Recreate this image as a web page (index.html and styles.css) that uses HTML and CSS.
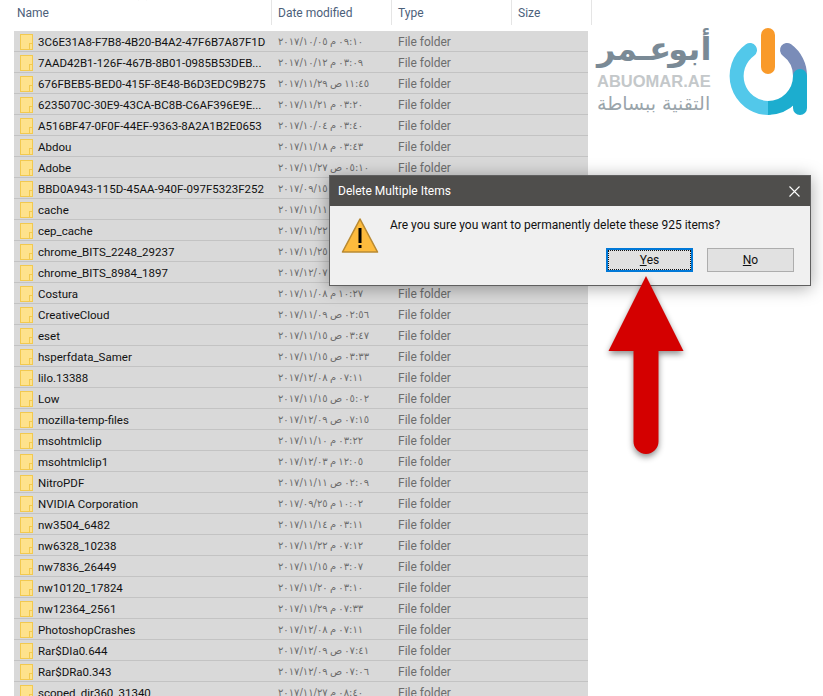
FILE: index.html
```html
<!DOCTYPE html>
<html lang="en">

<head>
    <meta charset="UTF-8">
    <title>Delete Multiple Items</title>
    <link rel="stylesheet" href="styles.css">
</head>

<body>
    <div class="page">
        <div class="explorer">
            <div class="header">
                <span class="sort-mark"></span>
                <div class="head-cell head-name">Name</div>
                <div class="head-cell head-date">Date modified</div>
                <div class="head-cell head-type">Type</div>
                <div class="head-cell head-size">Size</div>
            </div>

            <div class="rows">
                <div class="row"><i class="folder"></i><span class="name">3C6E31A8-F7B8-4B20-B4A2-47F6B7A87F1D</span><span class="date">٢٠١٧/١٠/٠٥&lrm; م&lrm; ٠٩:١٠</span><span class="type">File folder</span></div>
                <div class="row"><i class="folder"></i><span class="name">7AAD42B1-126F-467B-8B01-0985B53DEB...</span><span class="date">٢٠١٧/١٠/١٢&lrm; م&lrm; ٠٣:٠٩</span><span class="type">File folder</span></div>
                <div class="row"><i class="folder"></i><span class="name">676FBEB5-BED0-415F-8E48-B6D3EDC9B275</span><span class="date">٢٠١٧/١١/٢٩&lrm; ص&lrm; ١١:٤٥</span><span class="type">File folder</span></div>
                <div class="row"><i class="folder"></i><span class="name">6235070C-30E9-43CA-BC8B-C6AF396E9E...</span><span class="date">٢٠١٧/١١/٢١&lrm; م&lrm; ٠٣:٢٠</span><span class="type">File folder</span></div>
                <div class="row"><i class="folder"></i><span class="name">A516BF47-0F0F-44EF-9363-8A2A1B2E0653</span><span class="date">٢٠١٧/١٠/٠٤&lrm; م&lrm; ٠٣:٤٠</span><span class="type">File folder</span></div>
                <div class="row"><i class="folder"></i><span class="name">Abdou</span><span class="date">٢٠١٧/١١/١٨&lrm; م&lrm; ٠٣:٤٣</span><span class="type">File folder</span></div>
                <div class="row"><i class="folder"></i><span class="name">Adobe</span><span class="date">٢٠١٧/١١/٢٧&lrm; ص&lrm; ٠٥:١٠</span><span class="type">File folder</span></div>
                <div class="row"><i class="folder"></i><span class="name">BBD0A943-115D-45AA-940F-097F5323F252</span><span class="date">٢٠١٧/٠٩/١٥&lrm; م&lrm; ٠٣:١٢</span><span class="type">File folder</span></div>
                <div class="row"><i class="folder"></i><span class="name">cache</span><span class="date">٢٠١٧/١١/١١&lrm; ص&lrm; ٠٢:٠٥</span><span class="type">File folder</span></div>
                <div class="row"><i class="folder"></i><span class="name">cep_cache</span><span class="date">٢٠١٧/١١/٢٢&lrm; م&lrm; ٠٧:١٠</span><span class="type">File folder</span></div>
                <div class="row"><i class="folder"></i><span class="name">chrome_BITS_2248_29237</span><span class="date">٢٠١٧/١١/٢٥&lrm; م&lrm; ٠٣:٢٢</span><span class="type">File folder</span></div>
                <div class="row"><i class="folder"></i><span class="name">chrome_BITS_8984_1897</span><span class="date">٢٠١٧/١٢/٠٧&lrm; م&lrm; ٠٧:٣٠</span><span class="type">File folder</span></div>
                <div class="row"><i class="folder"></i><span class="name">Costura</span><span class="date">٢٠١٧/١١/٠٨&lrm; م&lrm; ١٠:٢٧</span><span class="type">File folder</span></div>
                <div class="row"><i class="folder"></i><span class="name">CreativeCloud</span><span class="date">٢٠١٧/١١/٠٩&lrm; ص&lrm; ٠٢:٥٦</span><span class="type">File folder</span></div>
                <div class="row"><i class="folder"></i><span class="name">eset</span><span class="date">٢٠١٧/١١/١٥&lrm; ص&lrm; ٠٣:٤٧</span><span class="type">File folder</span></div>
                <div class="row"><i class="folder"></i><span class="name">hsperfdata_Samer</span><span class="date">٢٠١٧/١١/١٥&lrm; ص&lrm; ٠٣:٣٣</span><span class="type">File folder</span></div>
                <div class="row"><i class="folder"></i><span class="name">lilo.13388</span><span class="date">٢٠١٧/١٢/٠٨&lrm; م&lrm; ٠٧:١١</span><span class="type">File folder</span></div>
                <div class="row"><i class="folder"></i><span class="name">Low</span><span class="date">٢٠١٧/١١/١٥&lrm; ص&lrm; ٠٥:٠٢</span><span class="type">File folder</span></div>
                <div class="row"><i class="folder"></i><span class="name">mozilla-temp-files</span><span class="date">٢٠١٧/١٢/٠٩&lrm; ص&lrm; ٠٧:١٥</span><span class="type">File folder</span></div>
                <div class="row"><i class="folder"></i><span class="name">msohtmlclip</span><span class="date">٢٠١٧/١١/١٠&lrm; م&lrm; ٠٣:٢٢</span><span class="type">File folder</span></div>
                <div class="row"><i class="folder"></i><span class="name">msohtmlclip1</span><span class="date">٢٠١٧/١٢/٠٣&lrm; م&lrm; ١٢:٠٥</span><span class="type">File folder</span></div>
                <div class="row"><i class="folder"></i><span class="name">NitroPDF</span><span class="date">٢٠١٧/١١/١١&lrm; ص&lrm; ٠٢:٠٩</span><span class="type">File folder</span></div>
                <div class="row"><i class="folder"></i><span class="name">NVIDIA Corporation</span><span class="date">٢٠١٧/٠٩/٢٥&lrm; م&lrm; ١٠:٠٢</span><span class="type">File folder</span></div>
                <div class="row"><i class="folder"></i><span class="name">nw3504_6482</span><span class="date">٢٠١٧/١١/١٤&lrm; م&lrm; ٠٣:١١</span><span class="type">File folder</span></div>
                <div class="row"><i class="folder"></i><span class="name">nw6328_10238</span><span class="date">٢٠١٧/١١/٢٢&lrm; م&lrm; ٠٧:١٢</span><span class="type">File folder</span></div>
                <div class="row"><i class="folder"></i><span class="name">nw7836_26449</span><span class="date">٢٠١٧/١١/١٥&lrm; م&lrm; ٠٣:٠٧</span><span class="type">File folder</span></div>
                <div class="row"><i class="folder"></i><span class="name">nw10120_17824</span><span class="date">٢٠١٧/١١/٢٠&lrm; م&lrm; ٠٣:١٠</span><span class="type">File folder</span></div>
                <div class="row"><i class="folder"></i><span class="name">nw12364_2561</span><span class="date">٢٠١٧/١١/٢٩&lrm; م&lrm; ٠٧:٣٣</span><span class="type">File folder</span></div>
                <div class="row"><i class="folder"></i><span class="name">PhotoshopCrashes</span><span class="date">٢٠١٧/١٢/٠٨&lrm; م&lrm; ٠٧:١١</span><span class="type">File folder</span></div>
                <div class="row"><i class="folder"></i><span class="name">Rar$DIa0.644</span><span class="date">٢٠١٧/١٢/٠٩&lrm; ص&lrm; ٠٧:٤١</span><span class="type">File folder</span></div>
                <div class="row"><i class="folder"></i><span class="name">Rar$DRa0.343</span><span class="date">٢٠١٧/١٢/٠٩&lrm; ص&lrm; ٠٧:٠٦</span><span class="type">File folder</span></div>
                <div class="row"><i class="folder"></i><span class="name">scoped_dir360_31340</span><span class="date">٢٠١٧/١١/٢٧&lrm; م&lrm; ٠٨:٤٠</span><span class="type">File folder</span></div>
            </div>
        </div>

        <div class="brand">
            <div class="brand-text">
                <div class="brand-name" lang="ar">أبو عـمر</div>
                <div class="brand-site">ABUOMAR.AE</div>
                <div class="brand-tag" lang="ar">التقنية ببساطة</div>
            </div>
            <svg class="brand-logo" width="90" height="95" viewBox="0 0 90 95" fill="none" stroke-width="14">
                <path d="M25 25A32 32 0 0 0 43 83" stroke="#52c8ea" stroke-linecap="round" />
                <path d="M62 25A32 32 0 0 1 75 51" stroke="#7a8cb8" stroke-linecap="round" />
                <path d="M75 51V83" stroke="#1cadcf" stroke-linecap="round" />
                <path d="M43 83A32 32 0 0 0 75 51" stroke="#1cadcf" />
                <path d="M43 10V42" stroke="#f99a2a" stroke-linecap="round" />
            </svg>
        </div>

        <!-- dialog over the list -->
        <div class="dialog">
            <div class="dialog-title">
                <span>Delete Multiple Items</span>
                <svg width="11" height="11" viewBox="0 0 11 11" stroke="#fff" stroke-width="1.1">
                    <path d="M0.5 0.5L10.5 10.5M10.5 0.5L0.5 10.5" />
                </svg>
            </div>
            <div class="dialog-body">
                <svg class="warn-icon" width="38" height="37" viewBox="0 0 38 37">
                    <path d="M19 2L36.5 35H1.500Z" fill="#fdbb3d" stroke="#b98a32" stroke-width="1.6" stroke-linejoin="round" />
                    <rect x="17.500" y="11" width="3" height="15" fill="#000" />
                    <rect x="17.500" y="28" width="3" height="3" fill="#000" />
                </svg>
                <div class="dialog-main">
                    <p class="dialog-msg">Are you sure you want to permanently delete these 925 items?</p>
                    <div class="dialog-buttons">
                        <button class="btn btn-default"><u>Y</u>es</button>
                        <button class="btn"><u>N</u>o</button>
                    </div>
                </div>
            </div>
        </div>

        <svg class="arrow" width="95" height="190" viewBox="0 0 95 190">
            <path d="M38 0L75.500 75H50.500V165.500A12.500 12.500 0 0 1 25.500 165.500V75H0.500Z" fill="#d40000" />
        </svg>
    </div>
</body>

</html>
```

FILE: styles.css
```css
body {
    margin: 0;
    background: white;
    font-family: "Roboto", "DejaVu Sans", sans-serif;
    font-size: 12px;
}

.page {
    position: relative;
    display: flex;
    height: 696px;
    overflow: hidden;
}

.explorer {
    width: 592px;
    flex-shrink: 0;
}

/* list header */
.header {
    position: relative;
    display: flex;
    height: 25px;
    margin-bottom: 6px;
    color: #4c607a;
}

.head-cell {
    box-sizing: border-box;
    flex-shrink: 0;
    padding-top: 6px;
    padding-left: 6px;
    border-right: 1px solid #e5e5e5;
}

.head-name {
    width: 272px;
    padding-left: 17px;
}

.head-date,
.head-type {
    width: 120px;
}

.head-size {
    width: 80px;
}

.sort-mark {
    position: absolute;
    left: 139px;
    top: -4px;
    width: 6px;
    height: 6px;
    border-left: 1px solid #8a8a8a;
    border-top: 1px solid #8a8a8a;
    transform: rotate(45deg);
}

/* rows */
.rows {
    margin-left: 14px;
    width: 574px;
}

.row {
    display: flex;
    align-items: center;
    box-sizing: border-box;
    height: 21px;
    padding-top: 1px;
    background-color: #d9d9d9;
    border-bottom: 1px solid #c3c3c3;
    white-space: nowrap;
}

.folder {
    position: relative;
    box-sizing: border-box;
    flex-shrink: 0;
    width: 13px;
    height: 16px;
    margin-left: 6px;
    background-color: #fee28c;
    border: 1px solid #f2c94f;
}

.folder::after {
    content: "";
    position: absolute;
    right: 0;
    bottom: 0;
    width: 2px;
    height: 5px;
    border-left: 1px solid #f2c94f;
    border-top: 1px solid #f2c94f;
}

.name {
    width: 240px;
    margin-left: 5px;
    color: #111;
    font-size: 11.5px;
}

.date {
    width: 120px;
    color: #6d6d6d;
    font-family: "DejaVu Sans", sans-serif;
    font-size: 10px;
    word-spacing: -1px;
}

.type {
    color: #6d6d6d;
}

/* logo */
.brand {
    display: flex;
    align-items: flex-start;
    gap: 16px;
    padding-top: 25px;
    padding-left: 5px;
}

.brand-text {
    width: 112px;
    text-align: right;
    white-space: nowrap;
}

.brand-name {
    height: 44px;
    margin-top: 2px;
    color: #7a8a96;
    font-family: "DejaVu Sans", sans-serif;
    font-size: 32px;
    font-weight: bold;
    line-height: 44px;
    word-spacing: -14px;
}

.brand-site {
    margin-top: 1px;
    color: #c4c8ca;
    font-family: "Liberation Sans", sans-serif;
    font-size: 16.500px;
    font-weight: bold;
    line-height: 18px;
}

.brand-tag {
    margin-top: 2px;
    color: #9aa5ab;
    font-family: "DejaVu Sans", sans-serif;
    font-size: 19px;
    line-height: 22px;
}

.brand-logo {
    flex-shrink: 0;
}

/* dialog */
.dialog {
    position: absolute;
    left: 329px;
    top: 175px;
    box-sizing: border-box;
    width: 482px;
    height: 111px;
    background-color: #f0f0f0;
    border: 1px solid #5f5f5f;
    box-shadow: 0 2px 16px rgba(0, 0, 0, 0.35);
}

.dialog-title {
    display: flex;
    align-items: center;
    justify-content: space-between;
    height: 30px;
    padding: 0 10px 0 8px;
    background-color: #4f4e4c;
    color: white;
}

.dialog-body {
    display: flex;
    padding: 11px 16px 0 11px;
}

.warn-icon {
    flex-shrink: 0;
}

.dialog-main {
    flex: 1;
    margin-left: 11px;
}

.dialog-msg {
    margin: 0;
    height: 28px;
    padding-top: 1px;
    box-sizing: border-box;
    color: #111;
}

.dialog-buttons {
    display: flex;
    justify-content: flex-end;
    gap: 14px;
    margin-top: 3px;
}

.btn {
    box-sizing: border-box;
    width: 87px;
    height: 24px;
    padding: 0;
    background-color: #e1e1e1;
    border: 1px solid #adadad;
    color: #111;
    font-family: inherit;
    font-size: 12px;
}

.btn-default {
    border: 2px solid #0078d7;
    outline: 1px dotted #111;
    outline-offset: -3px;
}

/* big red arrow */
.arrow {
    position: absolute;
    left: 608px;
    top: 276px;
    overflow: visible;
    filter: drop-shadow(0 3px 3px rgba(0, 0, 0, 0.45));
}
```
